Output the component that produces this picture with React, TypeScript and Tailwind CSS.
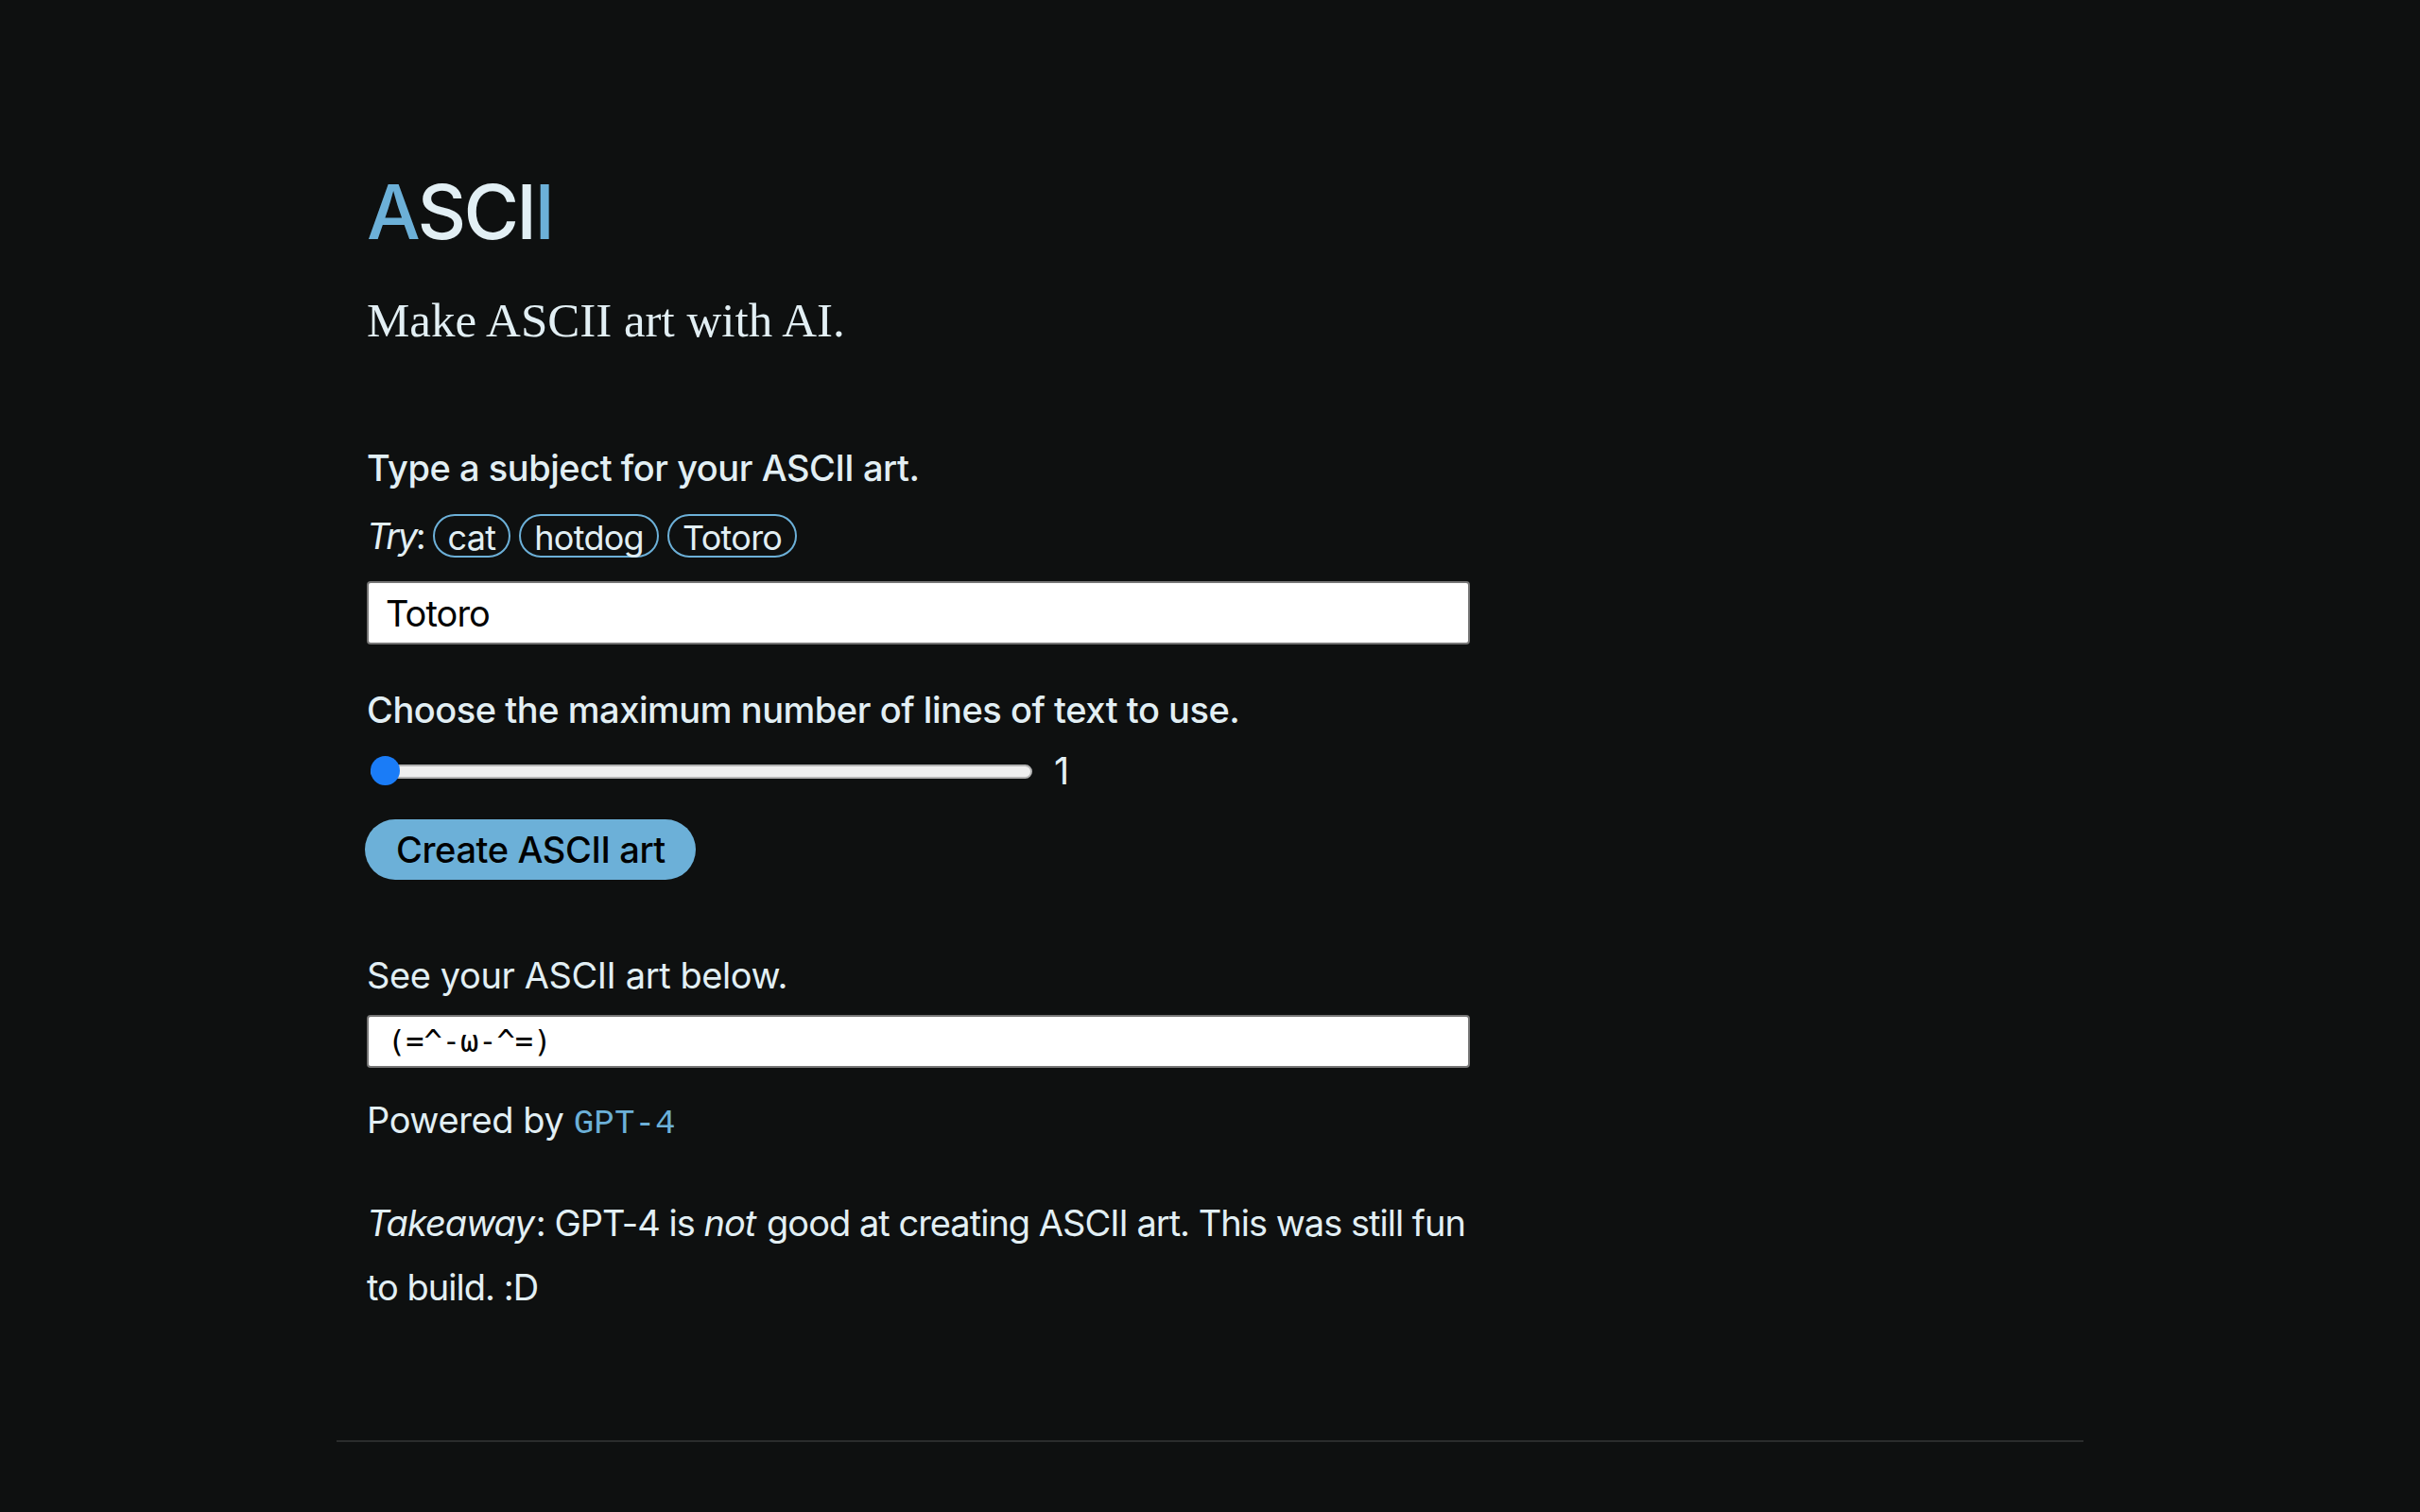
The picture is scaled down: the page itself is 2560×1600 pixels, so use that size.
import React from "react";

const chips = ["cat", "hotdog", "Totoro"];

const App = () => {
  return (
    <div className="min-h-screen bg-[#0e1010] text-[#e2eff4] font-['Inter',sans-serif] tracking-[-0.025em]">
      <div className="mx-auto w-[1848px] pt-[184px]">
        <main className="flex w-[1231px] flex-col px-[32px]">
          <h1 className="text-[80px] leading-[80px] font-medium tracking-[-0.035em]">
            <span className="text-[#6cb0d8]">A</span>
            SCI
            <span className="text-[#6cb0d8]">I</span>
          </h1>
          <p className="mt-[45px] font-['Liberation_Serif',Georgia,serif] text-[51px] leading-[60px] tracking-normal">
            Make ASCII art with AI.
          </p>

          <label className="mt-[102px] text-[38px] leading-[48px] font-medium tracking-[-0.012em]">
            Type a subject for your ASCII art.
          </label>
          <div className="mt-[25px] flex h-[46px] items-center gap-[9px] text-[38px] leading-[46px]">
            <span className="tracking-[-0.06em]">
              <em>Try</em>:
            </span>
            {chips.map((c) => (
              <button
                key={c}
                className="h-[46px] rounded-full border-2 border-[#6cb0d8] px-[14px] text-[36px] tracking-[-0.02em] text-[#e2eff4]"
              >
                {c}
              </button>
            ))}
          </div>
          <input
            className="mt-[25px] h-[67px] w-full rounded-[4px] border-2 border-[#767676] bg-white px-[18px] text-[38px] tracking-[-0.025em] text-black outline-none"
            defaultValue="Totoro"
          />

          <label className="mt-[45px] text-[38px] leading-[48px] font-medium tracking-[-0.012em]">
            Choose the maximum number of lines of text to use.
          </label>
          <div className="mt-[25px] flex h-[32px] items-center">
            <div className="relative ml-[4px] h-[32px] w-[700px]">
              <div className="absolute left-0 right-0 top-[9px] h-[15px] rounded-full border-2 border-[#b3b3b3] bg-[#efefef]" />
              <div className="absolute left-0 top-0 h-[31px] w-[31px] rounded-full bg-[#1a7cf7]" />
            </div>
            <span className="ml-[23px] text-[40px] leading-[32px]">1</span>
          </div>
          <button className="-ml-[2px] mt-[35px] flex h-[64px] w-[350px] items-center rounded-full bg-[#6cb0d8] pl-[33px] text-[38px] font-medium tracking-[-0.01em] text-black">
            Create ASCII art
          </button>

          <p className="mt-[77px] text-[38px] leading-[48px]">See your ASCII art below.</p>
          <div className="mt-[18px] flex h-[56px] w-full items-center rounded-[4px] border-2 border-[#767676] bg-white px-[20px] font-['DejaVu_Sans_Mono',monospace] text-[32px] tracking-normal text-black">
            (=^-ω-^=)
          </div>
          <p className="mt-[31px] text-[38px] leading-[48px]">
            Powered by{" "}
            <code className="font-['Liberation_Mono','Courier_New',monospace] text-[36px] tracking-normal text-[#6cb0d8]">
              GPT-4
            </code>
          </p>

          <p className="mt-[46px] text-[38px] leading-[68px] tracking-[-0.026em]">
            <em className="pr-[2px]">Takeaway</em>: GPT-4 is <em className="pr-[2px]">not</em> good at
            creating ASCII art. This was still fun to build. :D
          </p>
        </main>
        <footer className="mt-[128px] h-[80px] border-t-2 border-[#2a2c2c]" />
      </div>
    </div>
  );
};

export default App;
